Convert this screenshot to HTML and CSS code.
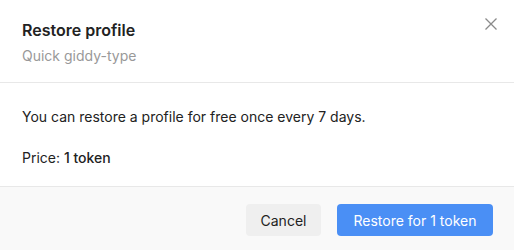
FILE: index.html
```html
<!DOCTYPE html>
<html lang="en">
<head>
    <meta charset="UTF-8">
    <title>Restore profile</title>
    <link rel="stylesheet" href="styles.css">
</head>
<body>
    <div class="modal">
        <!-- Header -->
        <div class="modal-header">
            <div>
                <h2 class="modal-title">Restore profile</h2>
                <p class="modal-subtitle">Quick giddy-type</p>
            </div>
            <button class="close-btn" aria-label="Close">
                <svg width="14" height="14" viewBox="0 0 14 14">
                    <path d="M1.5 1.5 L12.5 12.5 M12.5 1.5 L1.5 12.5" stroke="#8a8a8a" stroke-width="1.3" fill="none"/>
                </svg>
            </button>
        </div>

        <!-- Body -->
        <div class="modal-body">
            <p>You can restore a profile for free once every 7 days.</p>
            <p>Price: <span class="price">1 token</span></p>
        </div>

        <!-- Footer -->
        <div class="modal-footer">
            <button class="btn btn-cancel">Cancel</button>
            <button class="btn btn-primary">Restore for 1 token</button>
        </div>
    </div>
</body>
</html>
```

FILE: styles.css
```css
body, h2, p {
    margin: 0;
    padding: 0;
}

body {
    background-color: #fff;
    color: #222;
    font-family: Inter, "Noto Sans", sans-serif;
}

.modal {
    width: 514px;
    height: 250px;
    display: flex;
    flex-direction: column;
}

/* Header */
.modal-header {
    display: flex;
    justify-content: space-between;
    align-items: flex-start;
    padding: 20px 16px 0 22px;
    height: 62px;
    border-bottom: 1px solid #e8e8e8;
}

.modal-title {
    font-size: 16px;
    font-weight: 600;
    line-height: 20px;
    color: #222;
}

.modal-subtitle {
    font-size: 14px;
    line-height: 20px;
    color: #999;
    margin-top: 6px;
}

.close-btn {
    background: none;
    border: none;
    padding: 0;
    margin-top: -3px;
    cursor: pointer;
}

/* Body */
.modal-body {
    padding: 24px 22px 0;
    height: 79px;
    border-bottom: 1px solid #e8e8e8;
    font-size: 14px;
    line-height: 20px;
    color: #222;
}

.modal-body p {
    margin-bottom: 21px;
}

.price {
    font-weight: 500;
}

/* Footer */
.modal-footer {
    flex: 1;
    background-color: #f9f9f9;
    display: flex;
    justify-content: flex-end;
    align-items: flex-start;
    gap: 16px;
    padding: 17px 21px 0;
}

.btn {
    height: 32px;
    border: none;
    border-radius: 4px;
    font-family: Inter, "Noto Sans", sans-serif;
    font-size: 14px;
    padding: 0 14px;
    cursor: pointer;
}

.btn-cancel {
    background-color: #efefef;
    color: #222;
    width: 75px;
}

.btn-primary {
    background-color: #4a8ff5;
    color: #fff;
    width: 156px;
}
```
